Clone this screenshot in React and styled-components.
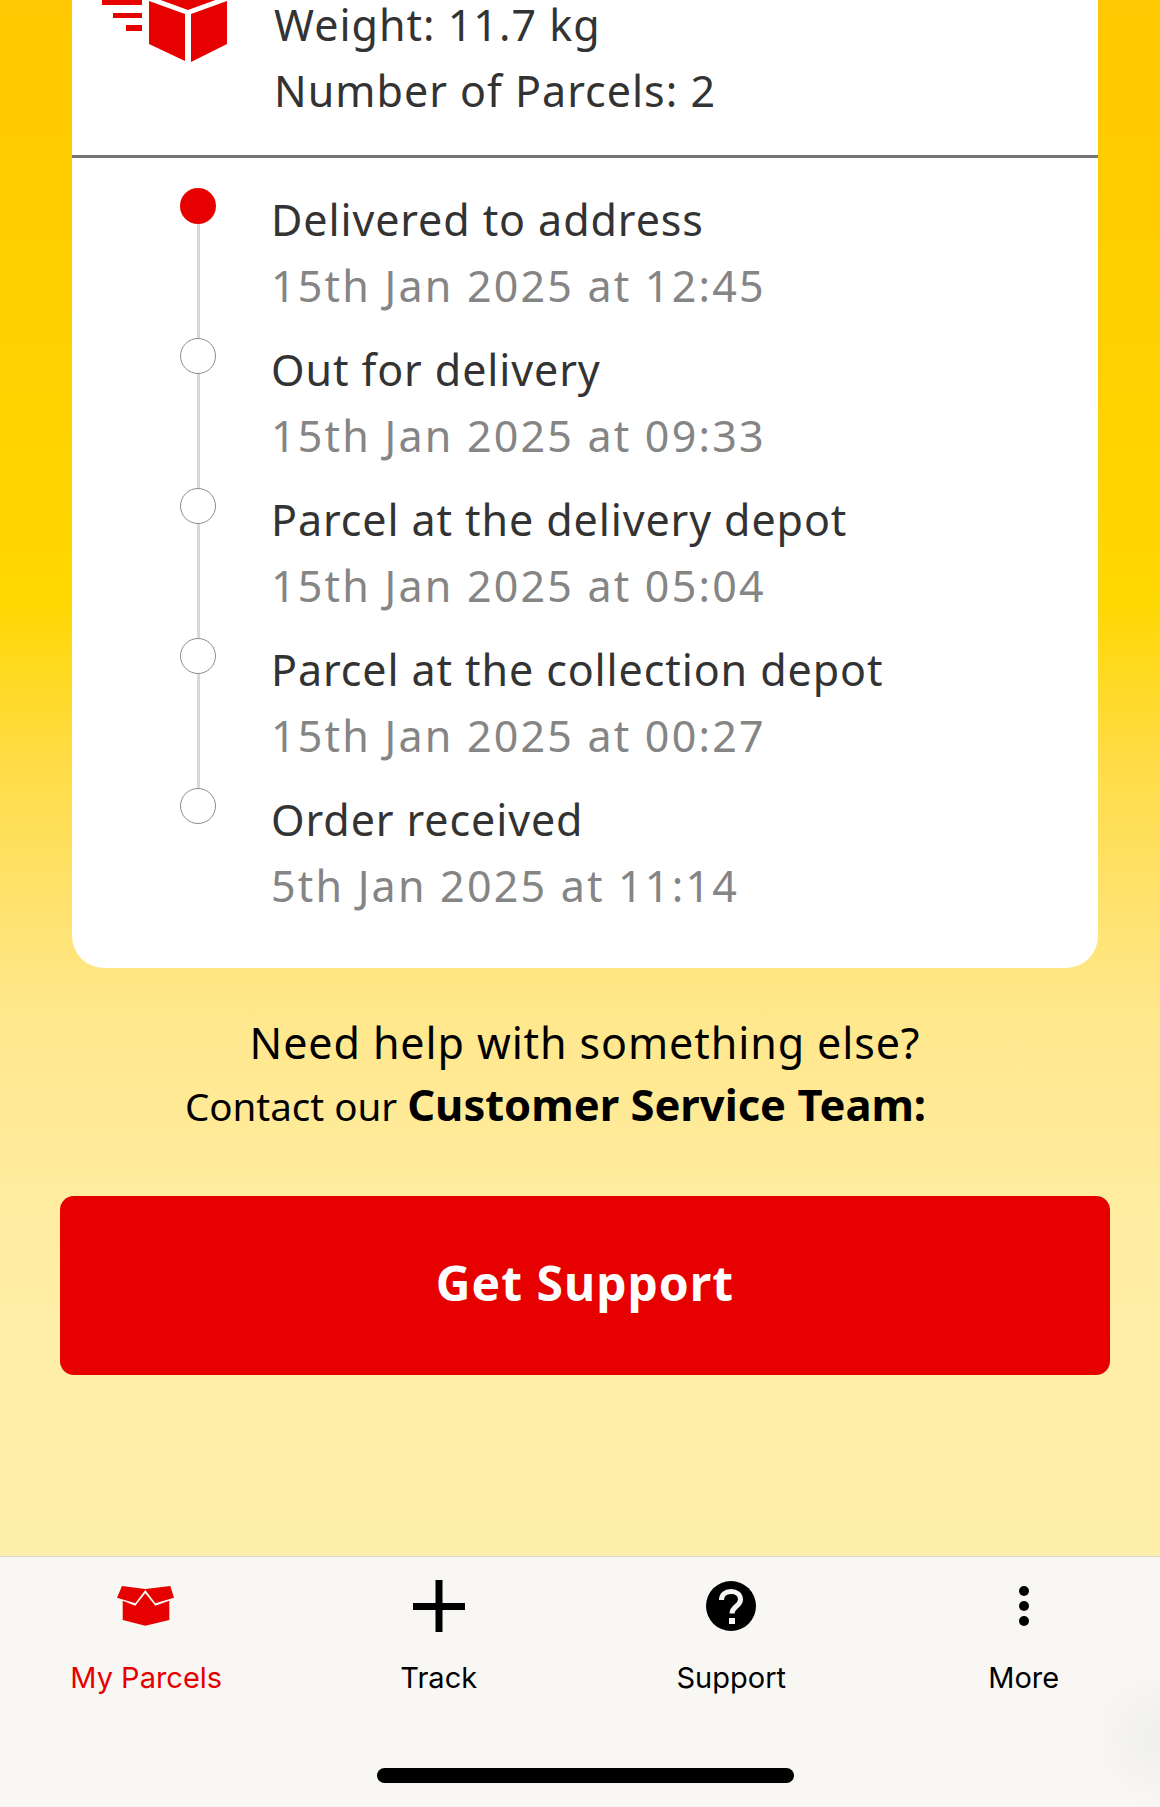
import React from 'react';
import styled, { createGlobalStyle } from 'styled-components';

const GlobalStyle = createGlobalStyle`
  html, body {
    margin: 0;
    padding: 0;
  }
  body {
    font-family: "Noto Sans", "Liberation Sans", sans-serif;
  }
`;

const events = [
  { title: 'Delivered to address', date: '15th Jan 2025 at 12:45', current: true },
  { title: 'Out for delivery', date: '15th Jan 2025 at 09:33' },
  { title: 'Parcel at the delivery depot', date: '15th Jan 2025 at 05:04' },
  { title: 'Parcel at the collection depot', date: '15th Jan 2025 at 00:27' },
  { title: 'Order received', date: '5th Jan 2025 at 11:14', last: true },
];

const ParcelIcon = () => (
  <ParcelSvg viewBox="0 -40 130 102">
    <g fill="#e60000">
      <rect x="2" y="-5" width="40" height="10" />
      <rect x="13" y="13" width="29" height="5" />
      <rect x="26" y="25" width="16" height="6" />
      <path d="M49 1 85 14V61L49 44Z" />
      <path d="M91 14 127 1V44L91 62Z" />
      <path d="M88 10 55 -2 88 -14 121 -2Z" />
    </g>
  </ParcelSvg>
);

const BoxIcon = () => (
  <svg width="58" height="42" viewBox="0 0 58 42">
    <path fill="#e60000" d="M5 1 28.300 4 53.300 1 57 12.700 38.300 18.300 28.300 5 18.300 18.300 0 12.700Z" />
    <path fill="#e60000" d="M5.700 15.700 18.300 20.700 28.300 8.300 38.300 20.700 52.300 15.700V35L28.300 40.700 5.700 35Z" />
  </svg>
);

const PlusIcon = () => (
  <svg width="52" height="52" viewBox="0 0 52 52">
    <path fill="#000" d="M22.5 0h7v23h22.500v7h-22.500v22h-7v-22h-22.500v-7h22.500z" />
  </svg>
);

const HelpIcon = () => (
  <svg width="50" height="50" viewBox="0 0 50 50">
    <circle cx="25" cy="25" r="25" fill="#000" />
    <path fill="none" stroke="#f9f7f4" strokeWidth="5" d="M15.500 19c0-5.500 4-8.500 9.500-8.500s9.500 3 9.500 8c0 7-8.500 6.500-8.500 14" />
    <rect x="23" y="37" width="6" height="6" fill="#f9f7f4" />
  </svg>
);

const MoreIcon = () => (
  <svg width="10" height="50" viewBox="0 0 10 50">
    <circle cx="5" cy="10" r="5" fill="#000" />
    <circle cx="5" cy="25" r="5" fill="#000" />
    <circle cx="5" cy="40" r="5" fill="#000" />
  </svg>
);

const tabs = [
  { label: 'My Parcels', icon: <BoxIcon />, active: true },
  { label: 'Track', icon: <PlusIcon /> },
  { label: 'Support', icon: <HelpIcon /> },
  { label: 'More', icon: <MoreIcon /> },
];

const App = () => (
  <>
    <GlobalStyle />
    <Page>
      <Scroller>
        <Card>
          <Summary>
            <ParcelIcon />
            <SummaryText>
              <SummaryLine>Weight: 11.7 kg</SummaryLine>
              <SummaryLine>Number of Parcels: 2</SummaryLine>
            </SummaryText>
          </Summary>
          <Timeline>
            {events.map((event) => (
              <EventRow key={event.title} $last={event.last}>
                <EventMarker $current={event.current} />
                <EventTitle>{event.title}</EventTitle>
                <EventDate>{event.date}</EventDate>
              </EventRow>
            ))}
          </Timeline>
        </Card>
        <HelpBlock>
          <HelpTitle>Need help with something else?</HelpTitle>
          <HelpContact>
            Contact our <strong>Customer Service Team:</strong>
          </HelpContact>
        </HelpBlock>
        <SupportButton>Get Support</SupportButton>
      </Scroller>
      <TabBar>
        {tabs.map((tab) => (
          <TabItem key={tab.label} $active={tab.active}>
            <TabIcon>{tab.icon}</TabIcon>
            {tab.label}
          </TabItem>
        ))}
        <HomeIndicator />
      </TabBar>
    </Page>
  </>
);

export default App;

const Page = styled.div`
  width: 1160px;
  height: 1807px;
  display: flex;
  flex-direction: column;
  overflow: hidden;
  background: linear-gradient(180deg, #ffc800 0%, #ffd700 33%, #ffdc45 42%, #ffe78c 56%, #ffeda2 68%, #feefac 86%);
`;

const Scroller = styled.main`
  flex: 1;
  min-height: 0;
  overflow: hidden;
  display: flex;
  flex-direction: column;
  align-items: center;
`;

const Card = styled.section`
  width: 1026px;
  margin: -40px 0 0 10px;
  padding-bottom: 31px;
  background: #fff;
  border-radius: 0 0 32px 32px;
  flex-shrink: 0;
`;

const Summary = styled.div`
  display: flex;
  height: 195px;
  padding-left: 28px;
  border-bottom: 3px solid #757575;
`;

const ParcelSvg = styled.svg`
  width: 130px;
  height: 102px;
  flex-shrink: 0;
`;

const SummaryText = styled.div`
  margin-left: 44px;
  padding-top: 32px;
`;

const SummaryLine = styled.div`
  font-size: 43px;
  line-height: 66px;
  color: #333;
  letter-spacing: 1px;
`;

const Timeline = styled.ol`
  list-style: none;
  margin: 0;
  padding: 29px 0 0;
`;

const EventRow = styled.li`
  position: relative;
  height: 150px;
  padding-left: 199px;
  &::before {
    content: '';
    display: ${({ $last }) => ($last ? 'none' : 'block')};
    position: absolute;
    left: 125px;
    top: 21px;
    width: 3px;
    height: 150px;
    background: #d8d8d8;
  }
`;

const EventMarker = styled.span`
  position: absolute;
  z-index: 1;
  left: 108px;
  top: 1px;
  width: 36px;
  height: 36px;
  box-sizing: border-box;
  border-radius: 50%;
  background: ${({ $current }) => ($current ? '#e60000' : '#fff')};
  border: ${({ $current }) => ($current ? 'none' : '1.500px solid #8c8c8c')};
`;

const EventTitle = styled.div`
  font-size: 43px;
  line-height: 66px;
  color: #333;
  letter-spacing: 0.9px;
`;

const EventDate = styled.div`
  font-size: 43px;
  line-height: 66px;
  color: #858585;
  letter-spacing: 2.2px;
`;

const HelpBlock = styled.div`
  margin-top: 42px;
  width: 1160px;
  flex-shrink: 0;
  text-align: center;
  color: #000;
`;

const HelpTitle = styled.div`
  font-size: 43px;
  line-height: 66px;
  padding-left: 10px;
  letter-spacing: 0.9px;
`;

const HelpContact = styled.div`
  font-size: 38.500px;
  line-height: 56px;
  padding-right: 49px;
  strong {
    font-size: 43.500px;
    font-weight: 700;
  }
`;

const SupportButton = styled.button`
  width: 1050px;
  height: 179px;
  flex-shrink: 0;
  margin-top: 62px;
  margin-left: 10px;
  padding: 0 0 6px;
  border: 0;
  border-radius: 14px;
  background: #e60000;
  color: #fff;
  font-family: inherit;
  font-size: 48px;
  font-weight: 700;
  letter-spacing: 1px;
`;

const TabBar = styled.nav`
  position: relative;
  height: 251px;
  box-sizing: border-box;
  flex-shrink: 0;
  display: grid;
  grid-template-columns: repeat(4, 292.500px);
  align-items: start;
  padding-top: 23px;
  border-top: 1px solid #ddd8c8;
  background: radial-gradient(circle at 1160px 180px, #efefed 0, #f9f7f4 70px);
`;

const TabItem = styled.div`
  display: flex;
  flex-direction: column;
  align-items: center;
  font-family: Inter, "Liberation Sans", sans-serif;
  font-size: 29px;
  line-height: 36px;
  color: ${({ $active }) => ($active ? '#e60000' : '#000')};
`;

const TabIcon = styled.div`
  height: 52px;
  display: flex;
  align-items: center;
  justify-content: center;
  margin-bottom: 28px;
`;

const HomeIndicator = styled.div`
  position: absolute;
  left: 377px;
  bottom: 24px;
  width: 417px;
  height: 15px;
  border-radius: 8px;
  background: #000;
`;
